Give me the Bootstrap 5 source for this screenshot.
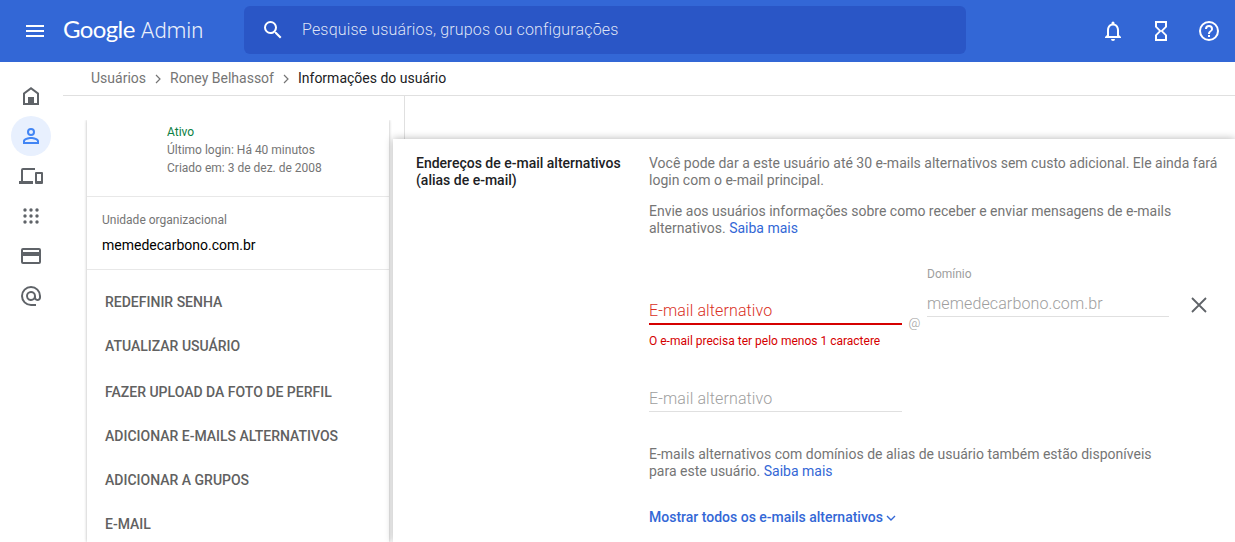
<!DOCTYPE html>
<html lang="pt-BR">
<head>
<meta charset="utf-8">
<title>Google Admin</title>
<link href="https://cdn.jsdelivr.net/npm/bootstrap@5.3.0/dist/css/bootstrap.min.css" rel="stylesheet">
<style>
html,body{height:542px;overflow:hidden;background:#fff;font-family:Roboto,"Liberation Sans",sans-serif;font-size:13px;color:#5f6368}
.gbar{height:62px;background:#3367d6;color:#fff}
.gmenu{width:63px;padding-left:26px}
.gmenu svg,.gact svg{display:block}
.gname{width:181px;font-family:Lato,Roboto,sans-serif;line-height:62px}
.gname b{font-weight:400;font-size:24px;letter-spacing:-.6px}
.gname span{font-size:22px;margin-left:6px;opacity:.9;font-family:Roboto,sans-serif;font-weight:300}
.gsearch{width:722px;height:48px;margin-bottom:2px;background:#2a56c6;border-radius:6px;padding-left:17px;font-size:16px;letter-spacing:.17px;color:rgba(255,255,255,.85);font-weight:300}
.gsearch svg{margin-right:17px}
.gact{margin-left:auto;gap:24px;padding-right:14px}
.gact svg{width:24px;height:24px}
.gshell{height:480px;position:relative}
.grail{width:63px;padding-top:14px}
.grail-item{width:40px;height:40px;margin-left:11px;border-radius:50%;display:flex;align-items:center;justify-content:center}
.grail-item.on{background:#e8f0fe}
.gcrumb{height:34px;border-bottom:1px solid #e0e0e0;padding-left:28px;font-size:14px;gap:8px;color:#757575}
.gcrumb strong{font-weight:400;color:#202124}
.gcol{width:342px;height:446px;border-right:1px solid #e0e0e0;padding:24px 15px 0 24px}
.gside{width:302px;height:422px;background:#fff;box-shadow:0 0 3px rgba(0,0,0,.3);clip-path:inset(0 -6px 0 -6px)}
.gstat{height:77px;padding:3px 0 0 80px;font-size:12px;line-height:18px;color:#757575;border-bottom:1px solid #e8e8e8}
.gstat div:first-child{color:#0b8043}
.gorg{height:73px;padding:16px 15px 0;border-bottom:1px solid #e8e8e8}
.gorg small{display:block;font-size:12px;line-height:14px;color:#757575;font-weight:400}
.gorg p{margin:9px 0 0;font-size:14px;line-height:18px;color:#000;font-weight:400}
.gaction{height:44px;padding-left:18px;display:flex;align-items:center;font-size:14px;font-weight:500;color:#616161}
.gaction:nth-child(3){margin-top:2px}
.gacts{padding-top:10px}
.gover{position:absolute;left:393px;top:77px;width:842px;height:403px;background:#fff;box-shadow:0 0 8px rgba(0,0,0,.3);padding:16px 0 0 23px}
.gtitle{width:233px;padding-right:14px;font-size:14px;font-weight:500;line-height:17px;color:#202124;flex:none}
.gbody{font-size:14px;line-height:17px;color:#757575;width:572px}
.gbody p{margin:0 0 14px}
.gbody p.gnarrow{max-width:510px}
.gbody a,.gmore{color:#3367d6;text-decoration:none}
.gfields{margin-top:24px;height:185px}
.gfield{width:253px}
.ginp{font-size:16px;font-weight:300;line-height:24px;letter-spacing:.12px;color:#9e9e9e;border-bottom:1px solid #e0e0e0}
.gerr{padding-top:38px}
.gerr .ginp{color:#d93025;border-bottom:2px solid #d50000}
.gerrmsg{font-size:12px;line-height:14px;color:#d50000;margin-top:9px}
.gfield>.ginp{margin-top:39px}
.gat{width:25px;text-align:center;font-size:13px;color:#9e9e9e;font-weight:300;padding-top:53px}
.gdom{width:242px;padding-top:6px}
.gdom small{display:block;font-size:12px;line-height:14px;color:#9e9e9e;margin-bottom:11px;font-weight:400}
.gx{margin-left:21px;margin-top:35px}
.gmore{font-weight:500;font-size:14px;margin-top:29px}
</style>
</head>
<body>
<header class="gbar d-flex align-items-center">
  <div class="gmenu"><svg width="18" height="12" viewBox="0 0 18 12" fill="#fff"><path d="M0 0h18v2H0zM0 5h18v2H0zM0 10h18v2H0z"/></svg></div>
  <div class="gname text-nowrap"><b>Google</b><span>Admin</span></div>
  <div class="gsearch d-flex align-items-center">
    <svg width="24" height="24" viewBox="0 0 24 24" fill="#fff"><path d="M15.5 14h-.79l-.28-.27A6.47 6.47 0 0 0 16 9.5 6.5 6.5 0 1 0 9.5 16c1.61 0 3.09-.59 4.23-1.57l.27.28v.79l5 4.99L20.49 19l-4.99-5zm-6 0C7.01 14 5 11.99 5 9.5S7.01 5 9.5 5 14 7.01 14 9.5 11.99 14 9.5 14z"/></svg>
    Pesquise usuários, grupos ou configurações
  </div>
  <div class="gact d-flex align-items-center">
    <svg viewBox="0 0 24 24" fill="#fff"><path d="M12 22a2 2 0 0 0 2-2h-4a2 2 0 0 0 2 2zm6-6v-5c0-3.07-1.63-5.64-4.5-6.32V4a1.5 1.5 0 0 0-3 0v.68C7.64 5.36 6 7.92 6 11v5l-2 2v1h16v-1l-2-2zm-2 1H8v-6c0-2.48 1.51-4.5 4-4.5s4 2.02 4 4.5v6z"/></svg>
    <svg viewBox="0 0 24 24" fill="#fff"><path d="M6 2v6h.01L6 8.01 10 12l-4 4 .01.01H6V22h12v-5.99h-.01L18 16l-4-4 4-3.99-.01-.01H18V2H6zm10 14.5V20H8v-3.5l4-4 4 4zm-4-5-4-4V4h8v3.5l-4 4z"/></svg>
    <svg viewBox="0 0 24 24" fill="#fff"><path d="M11 18h2v-2h-2v2zm1-16a10 10 0 1 0 0 20 10 10 0 0 0 0-20zm0 18a8 8 0 1 1 0-16 8 8 0 0 1 0 16zm0-14a4 4 0 0 0-4 4h2a2 2 0 1 1 4 0c0 2-3 1.75-3 5h2c0-2.25 3-2.5 3-5a4 4 0 0 0-4-4z"/></svg>
  </div>
</header>
<div class="gshell d-flex">
  <nav class="grail flex-shrink-0">
    <div class="grail-item"><svg width="24" height="24" viewBox="0 0 24 24" fill="#5f6368" fill-rule="evenodd"><path d="M12 3 4 9v12h16V9l-8-6zM6 19v-9l6-4.5 6 4.5v9h-3v-6H9v6H6z"/></svg></div>
    <div class="grail-item on"><svg width="24" height="24" viewBox="0 0 24 24" fill="#4285f4"><path d="M12 12a4 4 0 1 0 0-8 4 4 0 0 0 0 8zm0-6a2 2 0 1 1 0 4 2 2 0 0 1 0-4zm0 7c-2.7 0-8 1.3-8 4v3h16v-3c0-2.7-5.3-4-8-4zm6 5H6v-1c.2-.7 3.3-2 6-2s5.8 1.3 6 2v1z"/></svg></div>
    <div class="grail-item"><svg width="24" height="24" viewBox="0 0 24 24" fill="#5f6368"><path d="M4 6h12V4H4a2 2 0 0 0-2 2v11H0v3h14v-3H4V6zm19 2h-6a1 1 0 0 0-1 1v10a1 1 0 0 0 1 1h6a1 1 0 0 0 1-1V9a1 1 0 0 0-1-1zm-1 9h-4v-7h4v7z"/></svg></div>
    <div class="grail-item"><svg width="24" height="24" viewBox="0 0 24 24" fill="#5f6368"><circle cx="6" cy="6" r="1.7"/><circle cx="12" cy="6" r="1.7"/><circle cx="18" cy="6" r="1.7"/><circle cx="6" cy="12" r="1.7"/><circle cx="12" cy="12" r="1.7"/><circle cx="18" cy="12" r="1.7"/><circle cx="6" cy="18" r="1.7"/><circle cx="12" cy="18" r="1.7"/><circle cx="18" cy="18" r="1.7"/></svg></div>
    <div class="grail-item"><svg width="24" height="24" viewBox="0 0 24 24" fill="#5f6368"><path d="M20 4H4a2 2 0 0 0-2 2v12a2 2 0 0 0 2 2h16a2 2 0 0 0 2-2V6a2 2 0 0 0-2-2zm0 14H4v-6h16v6zm0-10H4V6h16v2z"/></svg></div>
    <div class="grail-item"><svg width="24" height="24" viewBox="0 0 24 24" fill="#5f6368"><path d="M12 2a10 10 0 0 0 0 20h5v-2h-5a8 8 0 1 1 8-8v1.43c0 .79-.71 1.57-1.5 1.57S17 14.22 17 13.43V12a5 5 0 1 0-1.46 3.53A3.7 3.7 0 0 0 18.5 17c1.97 0 3.5-1.6 3.5-3.57V12A10 10 0 0 0 12 2zm0 13a3 3 0 1 1 0-6 3 3 0 0 1 0 6z"/></svg></div>
  </nav>
  <main class="flex-grow-1">
    <div class="gcrumb d-flex align-items-center">
      <span>Usuários</span>
      <svg width="8" height="10" viewBox="0 0 8 10" fill="none" stroke="#757575" stroke-width="1.2"><path d="M2 1l4 4-4 4"/></svg>
      <span>Roney Belhassof</span>
      <svg width="8" height="10" viewBox="0 0 8 10" fill="none" stroke="#757575" stroke-width="1.2"><path d="M2 1l4 4-4 4"/></svg>
      <strong>Informações do usuário</strong>
    </div>
    <div class="gcol">
      <aside class="gside">
        <div class="gstat"><div>Ativo</div><div>Último login: Há 40 minutos</div><div>Criado em: 3 de dez. de 2008</div></div>
        <div class="gorg"><small>Unidade organizacional</small><p>memedecarbono.com.br</p></div>
        <div class="gacts">
          <div class="gaction">REDEFINIR SENHA</div>
          <div class="gaction">ATUALIZAR USUÁRIO</div>
          <div class="gaction">FAZER UPLOAD DA FOTO DE PERFIL</div>
          <div class="gaction">ADICIONAR E-MAILS ALTERNATIVOS</div>
          <div class="gaction">ADICIONAR A GRUPOS</div>
          <div class="gaction">E-MAIL</div>
        </div>
      </aside>
    </div>
    <section class="gover d-flex">
      <div class="gtitle">Endereços de e-mail alternativos (alias de e-mail)</div>
      <div class="gbody">
        <p>Você pode dar a este usuário até 30 e-mails alternativos sem custo adicional. Ele ainda fará login com o e-mail principal.</p>
        <p>Envie aos usuários informações sobre como receber e enviar mensagens de e-mails alternativos. <a href="#">Saiba mais</a></p>
        <div class="gfields d-flex">
          <div class="gfield">
            <div class="gerr"><div class="ginp">E-mail alternativo</div><div class="gerrmsg">O e-mail precisa ter pelo menos 1 caractere</div></div>
            <div class="ginp">E-mail alternativo</div>
          </div>
          <div class="gat">@</div>
          <div class="gdom"><small>Domínio</small><div class="ginp">memedecarbono.com.br</div></div>
          <svg class="gx" width="18" height="18" viewBox="0 0 18 18" fill="none" stroke="#5f6368" stroke-width="1.8"><path d="M2 2l14 14M16 2 2 16"/></svg>
        </div>
        <p class="gnarrow">E-mails alternativos com domínios de alias de usuário também estão disponíveis para este usuário. <a href="#">Saiba mais</a></p>
        <div class="gmore">Mostrar todos os e-mails alternativos <svg width="10" height="7" viewBox="0 0 10 7" fill="none" stroke="#3367d6" stroke-width="1.4"><path d="M1 1l4 4 4-4"/></svg></div>
      </div>
    </section>
  </main>
</div>
<script src="https://cdn.jsdelivr.net/npm/bootstrap@5.3.0/dist/js/bootstrap.bundle.min.js"></script>
</body>
</html>
